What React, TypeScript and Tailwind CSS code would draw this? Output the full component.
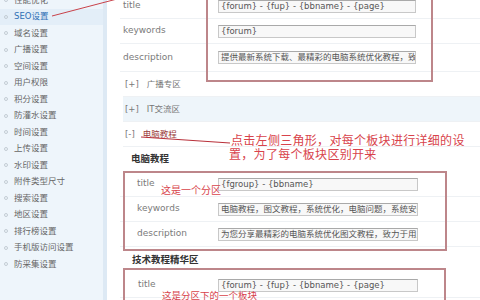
import React from 'react';

const SIDE_ITEMS = [
  '性能优化',
  'SEO设置',
  '域名设置',
  '广播设置',
  '空间设置',
  '用户权限',
  '积分设置',
  '防灌水设置',
  '时间设置',
  '上传设置',
  '水印设置',
  '附件类型尺寸',
  '搜索设置',
  '地区设置',
  '排行榜设置',
  '手机版访问设置',
  '防采集设置',
];

const CJK = "font-['DejaVu_Sans','Noto_Sans_CJK_SC',sans-serif]";

function Field({ value, width = 'w-[198px]' }: { value: string; width?: string }) {
  return (
    <div
      className={`${width} h-[13px] shrink-0 overflow-hidden whitespace-nowrap border border-[#c8c8c8] border-t-[#a9a9a9] bg-[#f8f8f8] pl-[2px] text-[8.5px] leading-[11px] text-[#555]`}
    >
      {value}
    </div>
  );
}

function SettingRow({
  label,
  value,
  labelClass,
  height = 'h-[25px]',
  inputWidth,
}: {
  label: string;
  value: string;
  labelClass: string;
  height?: string;
  inputWidth?: string;
}) {
  return (
    <div className={`flex ${height} items-center border-b border-[#eef1f4]`}>
      <span className={`${labelClass} shrink-0 text-[9px] text-[#7a7a7a]`}>{label}</span>
      <Field value={value} width={inputWidth} />
    </div>
  );
}

function Sidebar() {
  return (
    <aside className="w-[107px] shrink-0 border-r-4 border-[#dde9f4] bg-[#eef5fb]">
      <ul className="-mt-[8px]">
        {SIDE_ITEMS.map((name) => {
          const active = name === 'SEO设置';
          return (
            <li
              key={name}
              className={`flex h-[16.5px] items-center gap-[6px] pl-[4px] text-[8.5px] ${
                active ? 'bg-[#e3eef8] text-[#2f6fb5]' : 'text-[#666]'
              }`}
            >
              <span className="h-[4px] w-[4px] rounded-full border border-[#c3ccd4]" />
              {name}
            </li>
          );
        })}
      </ul>
    </aside>
  );
}

function ForumToggle({ sign, name, shaded, nameClass }: { sign: string; name: string; shaded?: boolean; nameClass?: string }) {
  return (
    <div
      className={`ml-[3px] flex h-[25px] items-center gap-[8px] border-b border-[#eef1f4] pl-[2px] text-[8.5px] text-[#777] ${
        shaded ? 'bg-[#eef5fa]' : ''
      }`}
    >
      <span>[{sign}]</span>
      <span className={nameClass}>{name}</span>
    </div>
  );
}

export default function App() {
  return (
    <div className={`relative flex h-[300px] w-[480px] overflow-hidden bg-white ${CJK}`}>
      <Sidebar />

      <main className="flex-1 pl-[13px]">
        <div className="-mt-[6px]">
          <SettingRow label="title" value="{forum} - {fup} - {bbname} - {page}" labelClass="w-[98px] pl-[3px]" />
          <SettingRow label="keywords" value="{forum}" labelClass="w-[98px] pl-[3px]" />
          <SettingRow
            label="description"
            value="提供最新系统下载、最精彩的电脑系统优化教程，致力于用户"
            labelClass="w-[98px] pl-[3px]"
            height="h-[28px]"
          />

          <ForumToggle sign="+" name="广播专区" />
          <ForumToggle sign="+" name="IT交流区" shaded />
          <ForumToggle sign="-" name="电脑教程" nameClass="text-[#9a3a3a]" />

          <div className="flex h-[25px] items-center pl-[11px] text-[9.5px] font-bold text-[#333]">电脑教程</div>
          <SettingRow label="title" value="{fgroup} - {bbname}" labelClass="w-[98px] pl-[17px]" inputWidth="w-[200px]" />
          <SettingRow
            label="keywords"
            value="电脑教程，图文教程，系统优化，电脑问题，系统安装"
            labelClass="w-[98px] pl-[17px]"
            inputWidth="w-[200px]"
          />
          <SettingRow
            label="description"
            value="为您分享最精彩的电脑系统优化图文教程，致力于用户"
            labelClass="w-[98px] pl-[17px]"
            inputWidth="w-[200px]"
          />

          <div className="flex h-[26px] items-center pl-[12px] text-[9.5px] font-bold text-[#333]">技术教程精华区</div>
          <SettingRow
            label="title"
            value="{forum} - {fup} - {bbname} - {page}"
            labelClass="w-[98px] pl-[18px]"
            inputWidth="w-[200px]"
          />
        </div>
      </main>

      {/* annotation overlays */}
      <div className="pointer-events-none absolute left-[206px] top-[-5px] h-[87px] w-[227px] border-2 border-[#bd868a]" />
      <div className="pointer-events-none absolute left-[123px] top-[171px] h-[80px] w-[324px] border-2 border-[#bd868a]" />
      <div className="pointer-events-none absolute left-[123px] top-[268px] h-[40px] w-[323px] border-2 border-[#bd868a]" />

      <svg className="pointer-events-none absolute left-0 top-0" width="480" height="300">
        <line x1="52" y1="16" x2="117" y2="-1" stroke="#c8414a" strokeWidth="1" />
        <line x1="141" y1="137" x2="230" y2="143" stroke="#b8303a" strokeWidth="1.2" />
      </svg>

      <div className="pointer-events-none absolute left-[231px] top-[134px] text-[12px] leading-[14px] tracking-[0.3px] text-[#d8434b]">
        <div>点击左侧三角形，对每个板块进行详细的设</div>
        <div className="-ml-[2px]">置，为了每个板块区别开来</div>
      </div>
      <div className="pointer-events-none absolute left-[161px] top-[185px] text-[10px] leading-[12px] text-[#d8434b]">
        这是一个分区
      </div>
      <div className="pointer-events-none absolute left-[162px] top-[290px] text-[9.5px] leading-[12px] text-[#d8434b]">
        这是分区下的一个板块
      </div>
    </div>
  );
}
